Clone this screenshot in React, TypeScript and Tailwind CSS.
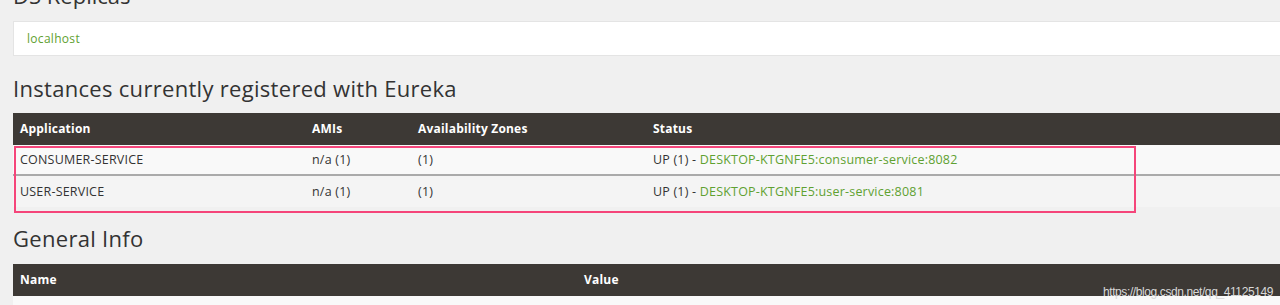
import React from 'react'

const instances = [
  { app: 'CONSUMER-SERVICE', amis: 'n/a (1)', zones: '(1)', host: 'DESKTOP-KTGNFE5:consumer-service:8082' },
  { app: 'USER-SERVICE', amis: 'n/a (1)', zones: '(1)', host: 'DESKTOP-KTGNFE5:user-service:8081' },
]

const App = () => {
  return (
    <div className="relative min-h-[305px] bg-[#f0f0f0] pl-[13px] overflow-hidden text-[#333] font-['Open_Sans',sans-serif]">
      <h2 className="-mt-[18px] h-[26px] text-[22px] leading-[26px] text-[#333]">DS Replicas</h2>

      {/* replicas box */}
      <div className="mt-[13px] h-[35px] bg-white border border-[#e4e4e4] border-r-0 flex items-center pl-[13px]">
        <span className="text-[12px] text-[#5fa131] tracking-[0.3px]">localhost</span>
      </div>

      <h2 className="mt-[17px] h-[30px] text-[22px] leading-[30px] tracking-[0.3px]">Instances currently registered with Eureka</h2>

      <div className="relative mt-[10px]">
        <div className="grid grid-cols-[299px_106px_235px_1fr] h-[32px] items-center bg-[#3d3935] text-white text-[12px] font-bold tracking-[0.2px]">
          <div className="pl-[7px]">Application</div>
          <div>AMIs</div>
          <div>Availability Zones</div>
          <div>Status</div>
        </div>
        {instances.map((row, i) => (
          <div
            key={row.app}
            className={`grid grid-cols-[299px_106px_235px_1fr] h-[31px] pt-[2px] items-center text-[12.5px] tracking-[0.2px] ${i === 0 ? 'bg-[#f9f9f9] border-b-2 border-[#aaa]' : 'bg-[#f4f4f4]'}`}
          >
            <div className="pl-[7px]">{row.app}</div>
            <div>{row.amis}</div>
            <div>{row.zones}</div>
            <div>
              UP (1) - <span className="text-[#5fa131]">{row.host}</span>
            </div>
          </div>
        ))}
        {/* annotation box */}
        <div className="absolute left-[1px] top-[33px] w-[1122px] h-[67px] border-2 border-[#f5457a]" />
      </div>

      <h2 className="mt-[16px] h-[30px] text-[22px] leading-[30px] tracking-[0.3px]">General Info</h2>

      <div className="mt-[11px]">
        <div className="grid grid-cols-[571px_1fr] h-[32px] items-center bg-[#3d3935] text-white text-[12px] font-bold tracking-[0.2px]">
          <div className="pl-[7px]">Name</div>
          <div>Value</div>
        </div>
        <div className="h-[31px] bg-[#f9f9f9]" />
      </div>

      <div className="absolute right-[7px] top-[283px] text-[12px] text-[#d8d8d8] font-['Liberation_Sans',sans-serif] tracking-[-0.4px]">
        https://blog.csdn.net/qq_41125149
      </div>
    </div>
  )
}

export default App
